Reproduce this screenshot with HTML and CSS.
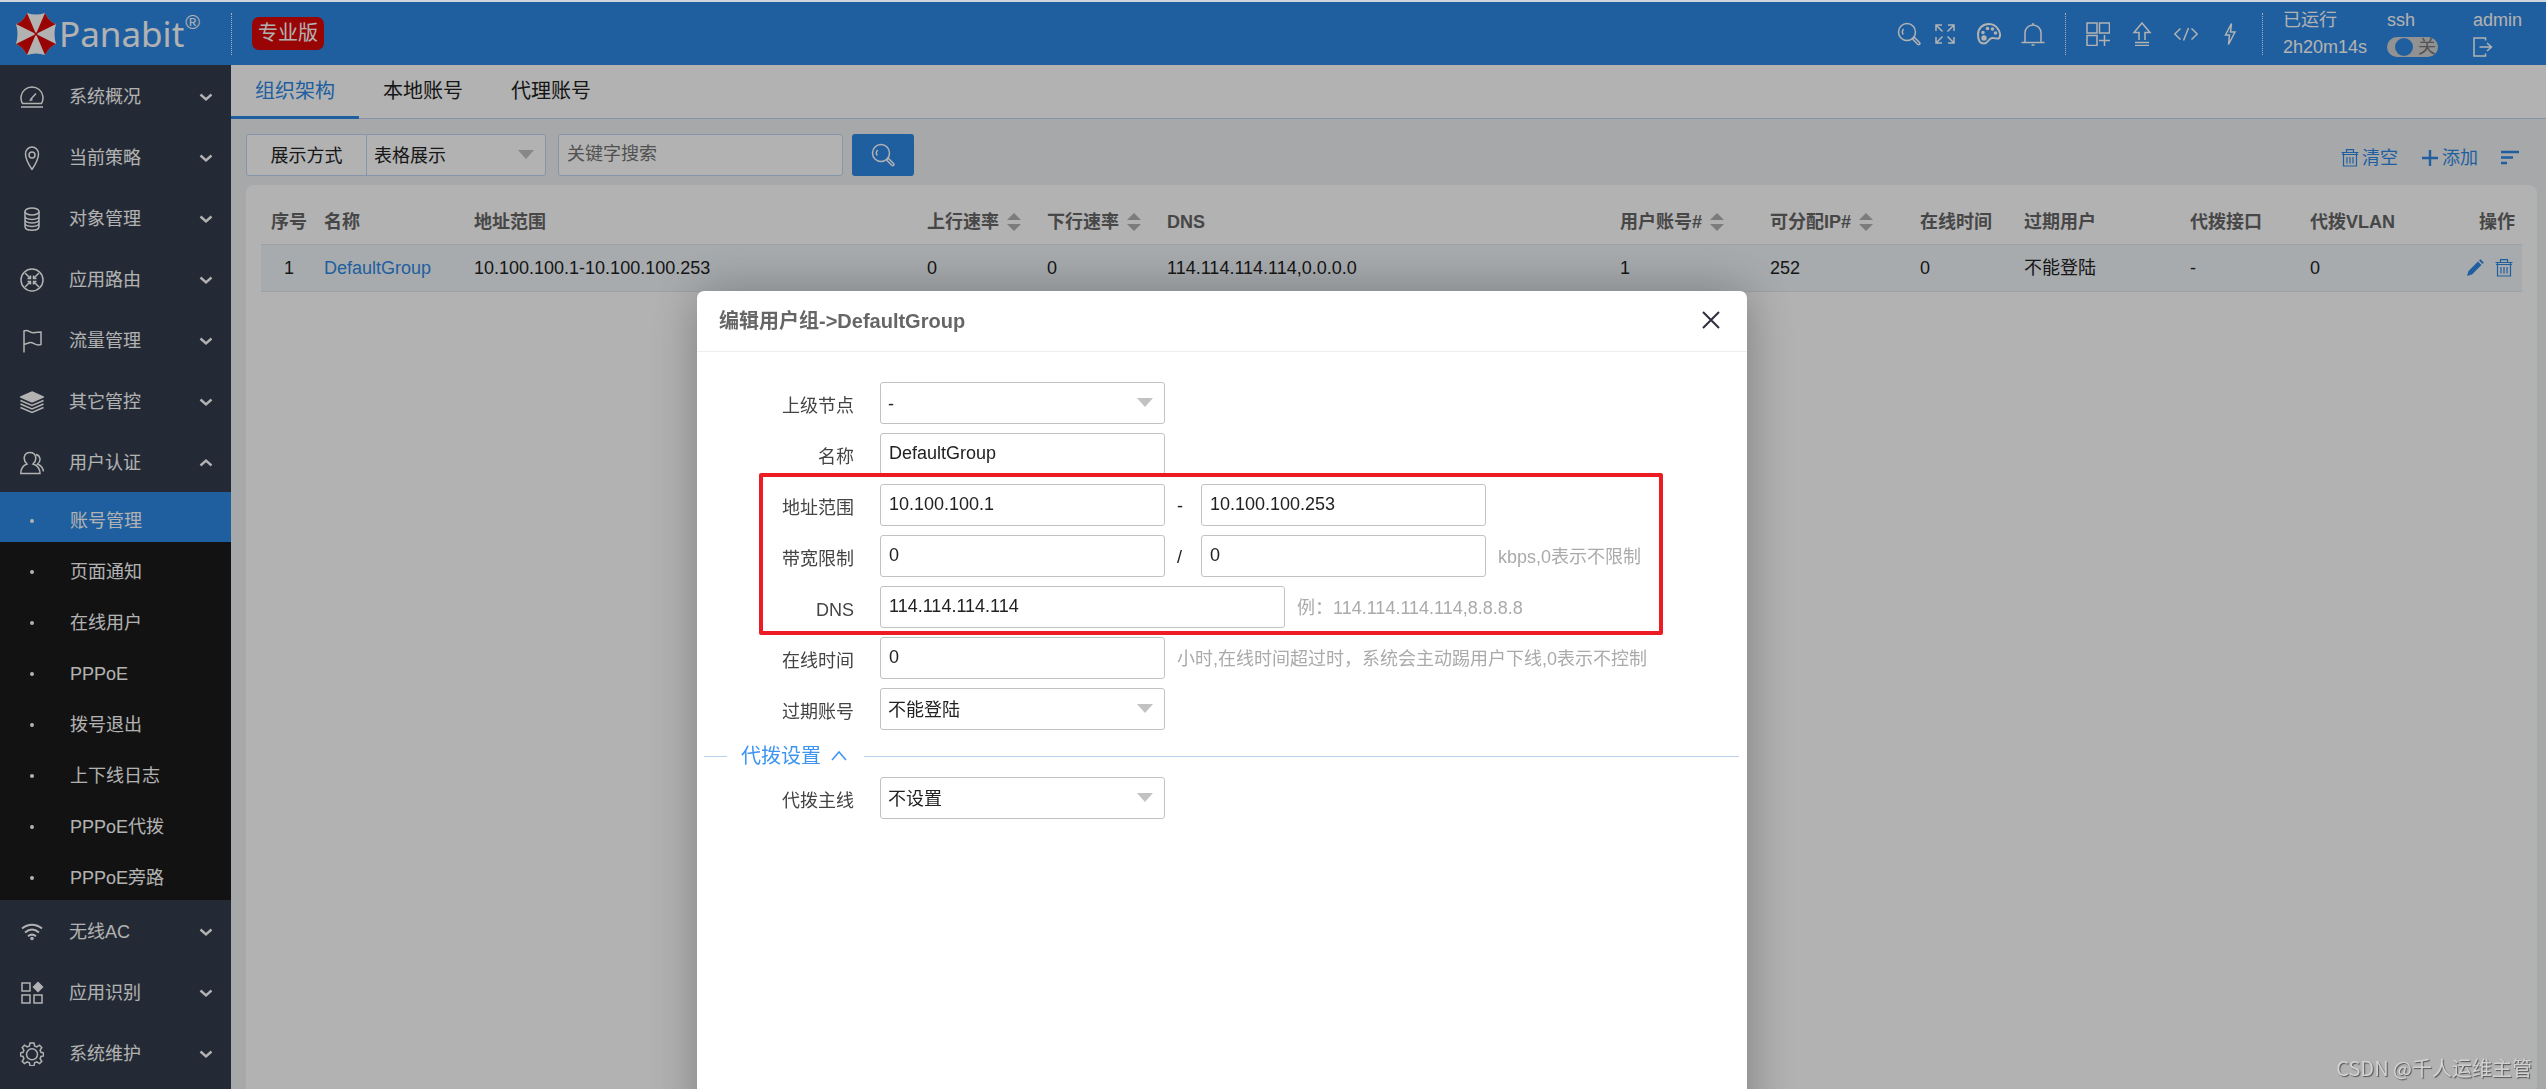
FILE: index.html
```html
<!DOCTYPE html>
<html lang="zh-CN">
<head>
<meta charset="utf-8">
<title>Panabit</title>
<link rel="stylesheet" href="styles.css">
</head>
<body>
<svg class="defs" width="0" height="0" aria-hidden="true">
  <symbol id="i-search" viewBox="0 0 24 24"><circle cx="10" cy="10" r="8.5"/><path d="M6.2 12.5a4.6 4.6 0 0 1 .4-5.6M15.5 17l1.8-1.8 5.2 5.3a1.2 1.2 0 0 1-1.8 1.8z"/></symbol>
  <symbol id="i-down" viewBox="0 0 14 14"><path d="M1.5 4.5L7 9.500l5.500-5"/></symbol>
  <symbol id="i-up" viewBox="0 0 14 14"><path d="M1.500 9.500L7 4.500l5.500 5"/></symbol>
  <symbol id="i-trash" viewBox="0 0 18 18"><path d="M.5 3.500h17M5.500 3V.700h7V3M2.500 3.500v13.500h13V3.500M1 5.500h16M6 8v6.500M9 8v6.500M12 8v6.500"/></symbol>
</svg>

<div class="app">
  <header class="topbar">
    <a class="logo" href="#">
      <svg class="logo-mark" viewBox="0 0 42 44" aria-hidden="true">
        <path fill="#fff" d="M12 1Q21 4 30 1Q34 10 41 12Q38 22 41 32Q34 35 30 43Q21 40 12 43Q8 35 1 32Q4 22 1 12Q8 10 12 1z"/>
        <g fill="#db0707"><path d="M21 22L12 1Q8 10 1 12z"/><path d="M21 22L30 1Q34 10 41 12z"/><path d="M21 22L1 32Q8 35 12 43z"/><path d="M21 22L41 32Q34 35 30 43z"/></g>
        <circle cx="21" cy="22" r="1.500" fill="#db0707"/>
      </svg>
      <span class="logo-name">Panabit</span><span class="logo-reg">®</span>
    </a>
    <i class="dots"></i>
    <span class="edition">专业版</span>
    <nav class="tools">
      <button class="tool tool-narrow" aria-label="搜索"><svg class="ic"><use href="#i-search"/></svg></button>
      <button class="tool" aria-label="全屏"><svg class="ic" viewBox="0 0 24 24"><path d="M3 9V3h6M3 3l6.500 6.500M15 3h6v6M21 3l-6.500 6.500M3 15v6h6M3 21l6.500-6.500M21 15v6h-6M21 21l-6.500-6.500"/></svg></button>
      <button class="tool" aria-label="主题"><svg class="ic ic-bold" viewBox="0 0 24 24"><path d="M12 2C5.500 2 1 6.500 1 12.500 1 18.500 3.500 21.500 7 21.500c4.500 0 4-5 8-5.500 3-.4 5.500 1.500 7 .2C25 12 20.500 2 12 2z"/><g class="solid"><circle cx="6" cy="10.500" r=".8"/><circle cx="10.500" cy="6.500" r=".8"/><circle cx="15.500" cy="7" r=".8"/><circle cx="18.500" cy="11" r=".8"/><circle cx="7" cy="16" r="1.700"/></g></svg></button>
      <button class="tool" aria-label="通知"><svg class="ic" viewBox="0 0 24 24"><path d="M4 20v-9a8 8 0 0 1 16 0v9M.500 20.500h23M12 1v2M10.500 23h3"/></svg></button>
      <i class="dots"></i>
      <button class="tool" aria-label="应用"><svg class="ic" viewBox="0 0 24 24"><path d="M1 1h10v10H1zM13.500 1h10v10h-10zM1 13.500h10v10H1zM18.500 13v11M13 18.500h11"/></svg></button>
      <button class="tool" aria-label="升级"><svg class="ic" viewBox="0 0 24 24"><path d="M9 18v-7.500H4L12 1l8 9.500h-5V18M5 20.500h14M5 23.500h14"/></svg></button>
      <button class="tool" aria-label="代码"><svg class="ic" viewBox="0 0 24 24"><path d="M6.500 6.500L.800 12l5.700 5.500M17.500 6.500l5.700 5.500-5.700 5.500M14.500 6l-5 12.500"/></svg></button>
      <button class="tool" aria-label="快捷"><svg class="ic" viewBox="0 0 24 24"><path d="M13.500 1.500L7.500 13h4l-1 9.500L17 10h-4.500z"/></svg></button>
      <i class="dots"></i>
    </nav>
    <div class="status">
      <span>已运行</span><label for="ssh">ssh</label><span>admin</span>
      <span>2h20m14s</span>
      <span class="switch"><input type="checkbox" id="ssh"><span class="switch-text">关</span></span>
      <a class="logout" href="#" aria-label="退出"><svg viewBox="0 0 20 20"><path d="M12.500 3.500V1H1v18h11.500v-2.500M6.500 10H18M14 6l4.500 4L14 14"/></svg></a>
    </div>
  </header>

  <div class="main">
    <nav class="side">
      <a class="item" href="#"><svg class="ic" viewBox="0 0 24 24"><path d="M2.500 18.500a11 11 0 1 1 19 0zM1 22h22M10.500 14.500l5.500-6M9.500 15.500l3-1"/></svg><span>系统概况</span><svg class="chev"><use href="#i-down"/></svg></a>
      <a class="item" href="#"><svg class="ic" viewBox="0 0 24 24"><path d="M12 23.500C8 17.500 5.500 13 5.500 8a6.500 7 0 0 1 13 0c0 5-2.500 9.500-6.500 15.500z"/><circle cx="12" cy="9" r="3"/></svg><span>当前策略</span><svg class="chev"><use href="#i-down"/></svg></a>
      <a class="item" href="#"><svg class="ic" viewBox="0 0 24 24"><ellipse cx="12" cy="4.500" rx="7" ry="3.500"/><path d="M5 4.500v15c0 5 14 5 14 0v-15M5 9c0 4.500 14 4.500 14 0M5 12.500c0 4.500 14 4.500 14 0M5 16c0 4.500 14 4.500 14 0"/></svg><span>对象管理</span><svg class="chev"><use href="#i-down"/></svg></a>
      <a class="item" href="#"><svg class="ic" viewBox="0 0 24 24"><circle cx="12" cy="12" r="11"/><path d="M5 5l5.500 5.500M19 5l-5.500 5.500M5 19l5.500-5.500M19 19l-5.500-5.500M7.500 10.500h3v-3M16.500 10.500h-3v-3M7.500 13.500h3v3M16.500 13.500h-3v3"/></svg><span>应用路由</span><svg class="chev"><use href="#i-down"/></svg></a>
      <a class="item" href="#"><svg class="ic" viewBox="0 0 24 24"><path d="M4 23.500V2c5-2 6 3 11 1.500L21 3v12.500c-6 2-7-2.500-11-2l-6 2"/></svg><span>流量管理</span><svg class="chev"><use href="#i-down"/></svg></a>
      <a class="item" href="#"><svg class="ic" viewBox="0 0 24 24"><path class="solid" d="M12 2l11.500 5L12 12 .500 7z"/><path d="M.500 10.500L12 15.500l11.500-5M.500 14L12 19l11.500-5M.500 17.500l11.500 5 11.500-5"/></svg><span>其它管控</span><svg class="chev"><use href="#i-down"/></svg></a>
      <a class="item" href="#"><svg class="ic" viewBox="0 0 24 24"><path d="M.800 22.500C.800 17 3 14.500 7 13 2.500 9 3.500 1.500 10 1.500S17.500 9 13 13c4.500 1.500 7 4 7 9.500zM16 3.500c4.500 1 5.500 6.500 1.500 9.500 3.500 1.500 5.500 3.500 6 7.500"/></svg><span>用户认证</span><svg class="chev"><use href="#i-up"/></svg></a>
      <div class="sub">
        <a class="sub-item active" href="#">账号管理</a>
        <a class="sub-item" href="#">页面通知</a>
        <a class="sub-item" href="#">在线用户</a>
        <a class="sub-item" href="#">PPPoE</a>
        <a class="sub-item" href="#">拨号退出</a>
        <a class="sub-item" href="#">上下线日志</a>
        <a class="sub-item" href="#">PPPoE代拨</a>
        <a class="sub-item" href="#">PPPoE旁路</a>
      </div>
      <a class="item" href="#"><svg class="ic ic-bold" viewBox="0 0 24 24"><path d="M2 8.500c6-5 14-5 20 0M5 12.500c4.500-3.800 9.500-3.800 14 0M8 16.200c2.500-2 5.500-2 8 0"/><circle class="solid" cx="12" cy="18.500" r=".8"/></svg><span>无线AC</span><svg class="chev"><use href="#i-down"/></svg></a>
      <a class="item" href="#"><svg class="ic" viewBox="0 0 24 24"><path d="M2 2h8v8H2zM2 14h8v8H2zM14 14h8v8h-8z"/><path class="solid" d="M18 1.500L22.500 6 18 10.500 13.500 6z"/></svg><span>应用识别</span><svg class="chev"><use href="#i-down"/></svg></a>
      <a class="item" href="#"><svg class="ic" viewBox="0 0 24 24"><circle cx="12" cy="12.300" r="5.500"/><path d="M10 1h4l.600 3 2.200.900L19.500 3.200l2.300 2.300-1.700 2.700.900 2.100 2.500.600v3l-2.500.600-.900 2.200 1.700 2.600-2.300 2.300-2.700-1.700-2.200.900-.600 3h-4l-.600-3-2.200-.900-2.700 1.700-2.300-2.300 1.700-2.600-.900-2.200L.500 13.900v-3l2.500-.600.900-2.100-1.700-2.700 2.300-2.300 2.700 1.700L9.400 4z"/></svg><span>系统维护</span><svg class="chev"><use href="#i-down"/></svg></a>
    </nav>

    <main class="content">
      <nav class="tabs">
        <a class="tab on" href="#">组织架构</a><a class="tab" href="#">本地账号</a><a class="tab" href="#">代理账号</a>
      </nav>
      <div class="toolbar">
        <div class="group">
          <label for="view">展示方式</label>
          <span class="pick"><select id="view"><option>表格展示</option></select></span>
        </div>
        <input class="box keyword" type="text" placeholder="关键字搜索" aria-label="关键字搜索">
        <button class="go" aria-label="搜索"><svg class="ic"><use href="#i-search"/></svg></button>
        <div class="actions">
          <button class="act"><svg class="bin"><use href="#i-trash"/></svg>清空</button>
          <button class="act"><svg class="plus" viewBox="0 0 18 18"><path d="M9 1v16M1 9h16"/></svg>添加</button>
          <button class="act" aria-label="排序"><svg class="plus" viewBox="0 0 18 18"><path d="M0 3h18M0 8.500h12M0 14h6"/></svg></button>
        </div>
      </div>
      <section class="card">
        <table class="grid">
          <colgroup><col class="c56"><col class="c150"><col><col class="c120"><col class="c120"><col><col class="c150"><col class="c150"><col class="c104"><col class="c166"><col class="c120"><col class="c120"><col class="c99"></colgroup>
          <thead><tr>
            <th class="mid">序号</th><th>名称</th><th>地址范围</th>
            <th>上行速率<i class="sort"></i></th><th>下行速率<i class="sort"></i></th><th>DNS</th>
            <th>用户账号#<i class="sort"></i></th><th>可分配IP#<i class="sort"></i></th>
            <th>在线时间</th><th>过期用户</th><th>代拨接口</th><th>代拨VLAN</th><th class="end">操作</th>
          </tr></thead>
          <tbody><tr>
            <td class="mid">1</td><td><a href="#">DefaultGroup</a></td><td>10.100.100.1-10.100.100.253</td>
            <td>0</td><td>0</td><td>114.114.114.114,0.0.0.0</td><td>1</td><td>252</td><td>0</td><td>不能登陆</td><td>-</td><td>0</td>
            <td><span class="ops"><button aria-label="编辑"><svg class="pen" viewBox="0 0 18 18"><path d="M1 17l1.500-5L12 2.500 15.500 6 6 15.500zM13 1.500l1.500-1.200 3.200 3.200-1.200 1.500z"/></svg></button><button aria-label="删除"><svg class="bin"><use href="#i-trash"/></svg></button></span></td>
          </tr></tbody>
        </table>
      </section>
    </main>
  </div>
</div>

<div class="backdrop">
  <section class="modal" role="dialog" aria-labelledby="dlg-title">
    <header class="modal-head">
      <h2 id="dlg-title">编辑用户组-&gt;DefaultGroup</h2>
      <button class="close" aria-label="关闭"><svg viewBox="0 0 18 18"><path d="M1 1l16 16M17 1L1 17"/></svg></button>
    </header>
    <form class="form">
      <div class="row"><label for="parent">上级节点</label><span class="pick field"><select id="parent"><option>-</option></select></span></div>
      <div class="row"><label for="gname">名称</label><input class="box field" id="gname" type="text" value="DefaultGroup"></div>
      <div class="marked">
        <div class="row"><label for="ip1">地址范围</label><input class="box field" id="ip1" type="text" value="10.100.100.1"><span class="sep">-</span><input class="box field" type="text" value="10.100.100.253" aria-label="结束地址"></div>
        <div class="row"><label for="up">带宽限制</label><input class="box field" id="up" type="text" value="0"><span class="sep">/</span><input class="box field" type="text" value="0" aria-label="下行"><span class="hint">kbps,0表示不限制</span></div>
        <div class="row"><label for="dns">DNS</label><input class="box field wide" id="dns" type="text" value="114.114.114.114"><span class="hint">例：114.114.114.114,8.8.8.8</span></div>
      </div>
      <div class="row"><label for="hours">在线时间</label><input class="box field" id="hours" type="text" value="0"><span class="hint">小时,在线时间超过时，系统会主动踢用户下线,0表示不控制</span></div>
      <div class="row"><label for="expire">过期账号</label><span class="pick field"><select id="expire"><option>不能登陆</option></select></span></div>
      <button class="fold" type="button"><span>代拨设置</span><svg viewBox="0 0 16 16"><path d="M1 12l7-8 7 8"/></svg></button>
      <div class="row"><label for="line">代拨主线</label><span class="pick field"><select id="line"><option>不设置</option></select></span></div>
    </form>
  </section>
</div>
<div class="watermark">CSDN @千人运维主管</div>
</body>
</html>
```
FILE: styles.css
```css
* { box-sizing: border-box; }
body {
  margin: 0;
  height: 100vh;
  overflow: hidden;
  border-top: 2px solid #d0d5dd;
  background: #f0f1f4;
  color: #222;
  font: 18px/24px "Liberation Sans", "Noto Sans CJK SC", sans-serif;
}
a { color: inherit; text-decoration: none; }
button { margin: 0; padding: 0; border: 0; background: none; color: inherit; font: inherit; }
input, select { font: inherit; color: inherit; }
svg { display: block; fill: none; stroke: currentColor; flex: none; }
.defs { position: absolute; }
.ic { width: 24px; height: 24px; stroke-width: 1.5; }
.ic-bold { stroke-width: 2; }
.solid { fill: currentColor; }

.app { height: 100%; display: flex; flex-direction: column; }

/* top bar */
.topbar { height: 63px; flex: none; display: flex; align-items: center; background: #2e89e4; color: #fff; }
.logo { width: 231px; display: flex; align-items: center; padding-left: 15px; }
.logo-mark { width: 42px; height: 44px; stroke: none; margin-right: 2px; }
.logo-name { font: 35px/44px "Noto Sans", sans-serif; }
.logo-reg { align-self: flex-start; font: 20px/20px "Liberation Sans", sans-serif; margin-left: 1px; }
.dots { width: 1px; height: 42px; border-left: 1px dotted #fff; }
.edition { margin-left: 20px; height: 33px; padding: 0 6px; border-radius: 7px; background: #db0707; font-size: 20px; line-height: 32px; }
.tools { margin-left: auto; display: flex; align-items: center; }
.tool { width: 44px; height: 44px; display: grid; place-items: center; }
.tool-narrow { width: 28px; }
.tools .dots { margin: 0 10px; }
.status { display: grid; grid-template-columns: 104px 86px 73px; grid-auto-rows: 27px; align-items: center; margin-left: 10px; }
.switch { position: relative; display: block; width: 51px; height: 20px; }
.switch input { appearance: none; display: block; margin: 0; width: 51px; height: 20px; border-radius: 10px; background: #d2d2d2; }
.switch input::before { content: ""; display: block; width: 18px; height: 18px; margin: 1px 8px; border-radius: 50%; background: #2e89e4; }
.switch-text { position: absolute; right: 2px; top: 0; line-height: 20px; color: #777; pointer-events: none; }
.logout svg { width: 20px; height: 20px; stroke-width: 1.5; }

.main { flex: 1; min-height: 0; display: flex; }

/* side menu */
.side { width: 231px; flex: none; background: #333d4c; color: #fff; overflow: hidden; }
.item { height: 61px; display: flex; align-items: center; padding: 3px 18px 0 20px; }
.item span { flex: 1; margin-left: 25px; }
.chev { width: 14px; height: 14px; stroke-width: 2.4; }
.sub { background: #1a1a1a; }
.sub-item { display: flex; align-items: center; height: 50px; margin-bottom: 1px; padding: 8px 0 0 30px; }
.sub-item::before { content: ""; width: 4px; height: 4px; border-radius: 50%; background: #fff; margin-right: 36px; }
.sub-item.active { background: #2e89e4; }
.sub::after { content: ""; display: table; }

/* content */
.content { flex: 1; min-width: 0; display: flex; flex-direction: column; }
.tabs { height: 54px; flex: none; display: flex; background: #fff; border-bottom: 1px solid #c2d6f4; }
.tab { height: 54px; padding: 0 24px; font-size: 20px; line-height: 52px; }
.tab.on { color: #2e89e4; border-bottom: 3px solid #2e89e4; }
.toolbar { display: flex; align-items: center; padding: 15px 27px 9px 15px; }
.group { display: flex; height: 42px; background: #fff; border: 1px solid #c2d6f4; border-radius: 3px; }
.group label { width: 120px; text-align: center; line-height: 42px; border-right: 1px solid #c2d6f4; }
.pick { position: relative; display: block; }
.pick select { appearance: none; display: block; width: 100%; height: 100%; padding: 2px 7px 0; border: 0; background: none; line-height: 24px; }
.pick::after { content: ""; position: absolute; right: 11px; top: 50%; margin-top: -5px; border: solid transparent; border-width: 9px 8px 0; border-top-color: #c2c2c2; pointer-events: none; }
.group .pick { width: 178px; }
.box { height: 42px; padding: 0 8px 2px; border: 1px solid #c2c2c2; border-radius: 3px; background: #fff; outline: 0; }
.keyword { width: 285px; margin-left: 12px; border-color: #c2d6f4; }
.keyword::placeholder { color: #757575; opacity: 1; }
.go { width: 62px; height: 42px; margin-left: 9px; border-radius: 3px; background: #2e89e4; color: #fff; display: grid; place-items: center; }
.actions { margin-left: auto; display: flex; align-items: center; gap: 23px; color: #2e89e4; padding-top: 5px; }
.act { display: flex; align-items: center; gap: 3px; }
.bin { width: 18px; height: 18px; stroke-width: 1.2; }
.plus { width: 18px; height: 18px; stroke-width: 2.4; }
.card { flex: 1; margin: 0 9px 0 15px; padding: 15px; border-radius: 8px 8px 0 0; background: #fff; }
.grid { width: 100%; table-layout: fixed; border-collapse: collapse; }
.grid th, .grid td { padding: 1px 7px 0; text-align: left; white-space: nowrap; }
.grid th { height: 44px; color: #666; font-weight: bold; }
.grid td { height: 47px; border: solid #e3e6ea; border-width: 1px 0; background: #f0f5f9; }
.grid td a { color: #2e89e4; }
.grid .mid { text-align: center; }
.grid .end { text-align: right; }
.c56 { width: 56px; } .c99 { width: 99px; } .c104 { width: 104px; }
.c120 { width: 120px; } .c150 { width: 150px; } .c166 { width: 166px; }
.sort { display: inline-block; width: 14px; height: 18px; margin-left: 8px; vertical-align: -3px; }
.sort::before, .sort::after { content: ""; display: block; border: solid transparent; border-width: 0 7px 7px; border-bottom-color: #b2b2b2; }
.sort::after { margin-top: 4px; border-width: 7px 7px 0; border-top-color: #b2b2b2; }
.ops { display: flex; justify-content: flex-end; gap: 11px; padding-right: 2px; color: #2e89e4; }
.pen { width: 18px; height: 18px; fill: currentColor; stroke: none; }

/* dialog */
.backdrop { position: fixed; inset: 2px 0 0; overflow: hidden; background: rgba(0, 0, 0, .3); }
.modal { width: 1050px; height: 100%; margin: 289px 0 0 697px; border-radius: 7px; background: #fff; box-shadow: 1px 1px 50px rgba(0, 0, 0, .3); }
.modal-head { display: flex; align-items: center; justify-content: space-between; height: 61px; padding: 0 27px 0 22px; border-bottom: 1px solid #eee; }
.modal-head h2 { margin: 0; color: #666; font-size: 20px; line-height: 28px; }
.close { padding-bottom: 2px; color: #2e2d3c; }
.close svg { width: 18px; height: 18px; stroke-width: 2; }
.form { padding-top: 30px; }
.row { display: flex; align-items: center; height: 42px; margin-bottom: 9px; }
.row label { width: 157px; margin-right: 26px; padding-top: 6px; text-align: right; color: #444; }
.field { width: 285px; height: 42px; }
.pick.field { border: 1px solid #c2c2c2; border-radius: 3px; }
.wide { width: 405px; }
.sep { width: 36px; padding: 2px 0 0 12px; }
.hint { margin-left: 12px; padding-top: 1px; color: #aaa; }
.marked { position: relative; margin-bottom: 9px; }
.marked::after { content: ""; position: absolute; left: 62px; right: 84px; top: -11px; bottom: -7px; border: 4px solid #ed1c24; border-radius: 2px; pointer-events: none; }
.marked .row:last-child { margin-bottom: 0; }
.fold { display: flex; align-items: center; width: 100%; height: 30px; padding: 0 8px 0 7px; margin: 11px 0 6px; color: #3d95f0; font-size: 20px; }
.fold::before, .fold::after { content: ""; height: 1px; background: #b9d0ea; }
.fold::before { width: 23px; }
.fold::after { flex: 1; }
.fold span { margin-left: 14px; }
.fold svg { width: 16px; height: 16px; margin: 0 17px 0 10px; stroke-width: 1.5; }

.watermark { position: fixed; right: 14px; bottom: 7px; font: 20px/28px "Noto Sans CJK SC", sans-serif; color: #d2d2d2; text-shadow: 1px 1px 1px #555; }
```
